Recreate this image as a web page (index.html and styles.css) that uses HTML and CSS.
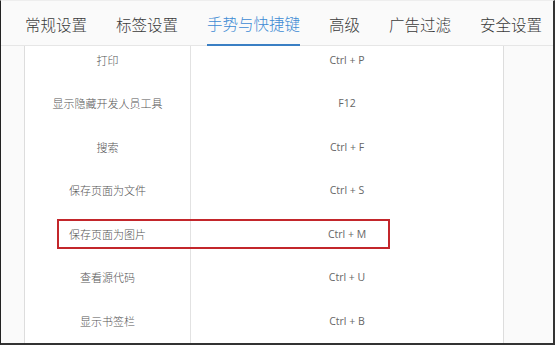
FILE: index.html
```html
<!DOCTYPE html>
<html lang="zh-CN">
<head>
    <meta charset="UTF-8">
    <title>设置 - 手势与快捷键</title>
    <link rel="stylesheet" href="styles.css">
</head>
<body>

<div class="settings">
    <div class="tabs">
        <div class="tab">常规设置</div>
        <div class="tab">标签设置</div>
        <div class="tab active">手势与快捷键</div>
        <div class="tab">高级</div>
        <div class="tab">广告过滤</div>
        <div class="tab">安全设置</div>
    </div>

    <div class="content">
        <div class="shortcut-table">
            <div class="row"><div class="name">打印</div><div class="keys">Ctrl + P</div></div>
            <div class="row"><div class="name">显示隐藏开发人员工具</div><div class="keys">F12</div></div>
            <div class="row"><div class="name">搜索</div><div class="keys">Ctrl + F</div></div>
            <div class="row"><div class="name">保存页面为文件</div><div class="keys">Ctrl + S</div></div>
            <div class="row"><div class="name">保存页面为图片</div><div class="keys">Ctrl + M</div></div>
            <div class="row"><div class="name">查看源代码</div><div class="keys">Ctrl + U</div></div>
            <div class="row"><div class="name">显示书签栏</div><div class="keys">Ctrl + B</div></div>
        </div>
        <!-- 标注框 -->
        <div class="highlight"></div>
    </div>
</div>

</body>
</html>
```

FILE: styles.css
```css
* {
    margin: 0;
    padding: 0;
    box-sizing: border-box;
}

body {
    font-family: "Open Sans", "Noto Sans CJK SC", sans-serif;
    background: #fafafa;
    width: 555px;
    height: 345px;
    overflow: hidden;
}

.settings {
    height: 345px;
    border-left: 1px solid #222;
    border-right: 2px solid #333;
    border-bottom: 2px solid #333;
    border-top: 1px solid #eee;
    display: flex;
    flex-direction: column;
}

.tabs {
    display: flex;
    gap: 29px;
    padding-left: 24px;
    height: 45px;
    border-bottom: 1px solid #e6e6e6;
    flex-shrink: 0;
}

.tab {
    font-family: "Noto Sans CJK SC", sans-serif;
    font-size: 15.5px;
    font-weight: 300;
    color: #3a3a3a;
    line-height: 46px;
}

.tab.active {
    color: #3d8ad4;
    border-bottom: 2px solid #3a7fc4;
    line-height: 44px;
    margin-bottom: -1px;
}

.content {
    position: relative;
    flex: 1;
    overflow: hidden;
    padding-left: 23px;
}

.shortcut-table {
    width: 480px;
    background: #fff;
    border-left: 1px solid #ddd;
    border-right: 1px solid #ddd;
    margin-top: -8px;
}

.row {
    display: flex;
    height: 43.5px;
    align-items: center;
    font-size: 10.5px;
    color: #555;
}

.name {
    width: 166px;
    height: 100%;
    border-right: 1px solid #e2e2e2;
    display: flex;
    align-items: center;
    justify-content: center;
    font-family: "Noto Sans CJK SC", sans-serif;
    font-size: 11px;
    font-weight: 300;
}

.keys {
    flex: 1;
    text-align: center;
    color: #666;
}

.highlight {
    position: absolute;
    left: 56px;
    top: 173px;
    width: 333px;
    height: 30px;
    border: 2px solid #c3262b;
}
```
